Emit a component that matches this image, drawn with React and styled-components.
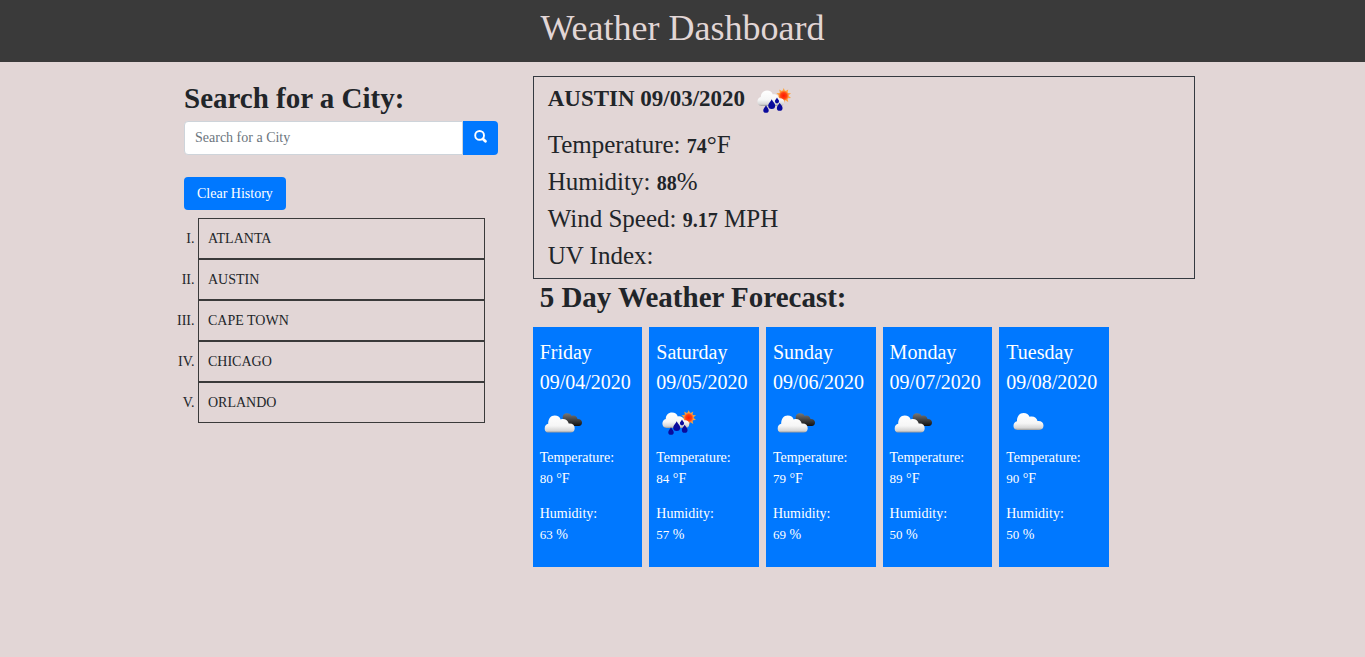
import React from "react";
import styled, { createGlobalStyle } from "styled-components";

const ink = "#212529";
const slate = "#3a3a3a";
const blush = "#e2d6d6";
const blue = "#0078ff";

const GlobalStyle = createGlobalStyle`
  *, *::before, *::after { box-sizing: border-box; }
  body {
    margin: 0;
    background: ${blush};
    color: ${ink};
    font-family: "Liberation Serif", "Times New Roman", serif;
    font-size: 14px;
    line-height: 21px;
  }
  h1, h2, h3, p, ol, dl, dd { margin: 0; }
  button, input { font: inherit; }
`;

const Header = styled.header`
  background: ${slate};
  color: ${blush};
  padding: 7px 14px 13px;
  text-align: center;
`;

const SiteTitle = styled.h1`
  font-size: 36px;
  line-height: 42px;
  font-weight: 400;
`;

const Layout = styled.main`
  display: grid;
  grid-template-columns: 1fr 2fr;
  max-width: 1025px;
  margin: 0 auto;
  padding-top: 14px;
`;

const Sidebar = styled.aside`
  padding: 5px 14px 14px;
`;

const SectionTitle = styled.h2`
  font-size: 29px;
  line-height: 34px;
  font-weight: 700;
`;

const SearchForm = styled.form`
  display: flex;
  margin-top: 6px;
`;

const SearchInput = styled.input`
  flex: 1;
  min-width: 0;
  height: 34px;
  padding: 4px 10px;
  border: 1px solid #ced4da;
  border-radius: 4px 0 0 4px;
  background: #fff;
  color: #495057;
  &::placeholder { color: #6c757d; opacity: 1; }
`;

const Button = styled.button`
  border: 0;
  border-radius: ${(p) => (p.$attached ? "0 4px 4px 0" : "4px")};
  background: ${blue};
  color: #fff;
  padding: 6px ${(p) => (p.$attached ? "11px" : "13px")};
  cursor: pointer;
`;

const SearchIcon = styled.svg`
  display: block;
  width: 13px;
  height: 13px;
  margin-bottom: 4px;
`;

const History = styled.div`
  margin-top: 22px;
`;

const CityList = styled.ol`
  list-style: upper-roman;
  margin-top: 8px;
  padding: 0 13px 0 14px;
`;

const City = styled.li`
  border: 1px solid ${slate};
  padding: 9px;
`;

const Content = styled.section`
  padding-left: 21px;
`;

const Current = styled.article`
  border: 1px solid #343a40;
  padding: 4px 14px;
`;

const CurrentTitle = styled.h3`
  display: flex;
  align-items: center;
  gap: 6px;
  margin-bottom: 9px;
  font-size: 23px;
  line-height: 28px;
`;

const Reading = styled.p`
  font-size: 25px;
  line-height: 37px;
  b {
    font-size: 20px;
    line-height: 20px;
  }
`;

const ForecastTitle = styled(SectionTitle)`
  padding: 1px 7px 0;
`;

const Forecast = styled.div`
  display: grid;
  grid-template-columns: repeat(5, 1fr);
  gap: 7px;
  width: 87%;
  margin-top: 13px;
`;

const DayCard = styled.article`
  background: ${blue};
  color: #fff;
  padding: 10px 7px 22px;
`;

const DayTitle = styled.h3`
  font-size: 20px;
  line-height: 30px;
  font-weight: 400;
  margin-bottom: 6px;
`;

const Stat = styled.p`
  margin-top: ${(p) => (p.$first ? "8px" : "14px")};
  small { font-size: 13px; }
`;

const Picture = styled.svg`
  display: block;
  flex: none;
  width: 50px;
  height: 36px;
`;

const cloudPath =
  "M4 17C1 17 0 14.8 0 12.8C0 10.2 1.6 8.7 3.5 8.2C3.4 3.4 6 0 10 0C13.1 0 15.2 1.7 16 3.8C19.8 2.6 23.4 4.5 24 8C27.7 7.5 30 9.7 30 12.6C30 15.2 28.5 17 25.8 17Z";

const drops = [
  [16, 24.2, 1.05],
  [21.7, 18.2, 1.35],
  [27, 16.6, 0.8],
  [29.7, 21.8, 1.1],
];

const rayAngles = [0, 36, 72, 108, 144, 180, 216, 252, 288, 324];

function WeatherIcon({ kind, label }) {
  const uid = React.useId();
  const light = `${uid}light`;
  const dark = `${uid}dark`;
  const sun = `${uid}sun`;
  return (
    <Picture viewBox="1 0 50 36" role="img" aria-label={label}>
      <defs>
        <linearGradient id={light} x1="0" y1="0" x2="0" y2="1">
          <stop offset="0" stopColor="#fff" />
          <stop offset="0.6" stopColor="#f6f6f6" />
          <stop offset="0.88" stopColor="#d6d6d6" />
          <stop offset="1" stopColor="#9a9a9a" />
        </linearGradient>
        <linearGradient id={dark} x1="0" y1="0" x2="0" y2="1">
          <stop offset="0" stopColor="#777" />
          <stop offset="0.5" stopColor="#444" />
          <stop offset="1" stopColor="#111" />
        </linearGradient>
        <radialGradient id={sun}>
          <stop offset="0" stopColor="#ff1800" />
          <stop offset="0.6" stopColor="#ff4010" />
          <stop offset="1" stopColor="#ffa040" />
        </radialGradient>
      </defs>
      {kind === "rain" && (
        <>
          {rayAngles.map((angle) => (
            <path
              key={angle}
              transform={`rotate(${angle} 33.7 14.7)`}
              d="M32.4 10.2L33.7 7L35 10.2Z"
              fill="#ffa238"
            />
          ))}
          <circle cx="33.7" cy="14.7" r="5.1" fill={`url(#${sun})`} />
          <path
            d="M11.5 25C8.6 25 7.4 22.8 7.4 20.6C7.4 18.2 9 16.4 10.8 16C10.8 12.2 13.4 9.6 17 9.6C20 9.6 22 11.2 22.8 13.4C25.6 12.6 28.4 14.2 29.2 17.2C32.4 16.9 34.2 18.6 34.2 21C34.2 23.4 32.8 25 30.5 25Z"
            fill={`url(#${light})`}
          />
          {drops.map(([x, y, scale]) => (
            <path
              key={x}
              transform={`translate(${x} ${y}) scale(${scale})`}
              d="M0 0C.7 1.7 2.6 3 2.6 4.7A2.6 2.6 0 0 1-2.6 4.7C-2.6 3-.7 1.7 0 0Z"
              fill="#0a0a9c"
            />
          ))}
        </>
      )}
      {kind === "broken" && (
        <>
          <path
            d="M24 17C23 13 24.5 10.3 28 10.3C30.7 10.3 32.1 11.5 32.8 13C35.6 11.8 37.8 13.3 38.5 15.9C41.5 15.8 43 17.6 43 19.6C43 21.8 41.8 23 39.8 23H30Z"
            fill={`url(#${dark})`}
          />
          <path d={cloudPath} transform="translate(5.7 12.6)" fill={`url(#${light})`} />
        </>
      )}
      {kind === "cloud" && (
        <path d={cloudPath} transform="translate(8.5 10)" fill={`url(#${light})`} />
      )}
    </Picture>
  );
}

const cities = ["ATLANTA", "AUSTIN", "CAPE TOWN", "CHICAGO", "ORLANDO"];

const days = [
  { name: "Friday", date: "09/04/2020", kind: "broken", label: "Broken clouds", temp: 80, humidity: 63 },
  { name: "Saturday", date: "09/05/2020", kind: "rain", label: "Rain", temp: 84, humidity: 57 },
  { name: "Sunday", date: "09/06/2020", kind: "broken", label: "Broken clouds", temp: 79, humidity: 69 },
  { name: "Monday", date: "09/07/2020", kind: "broken", label: "Broken clouds", temp: 89, humidity: 50 },
  { name: "Tuesday", date: "09/08/2020", kind: "cloud", label: "Scattered clouds", temp: 90, humidity: 50 },
];

export default function App() {
  return (
    <>
      <GlobalStyle />
      <Header>
        <SiteTitle>Weather Dashboard</SiteTitle>
      </Header>
      <Layout>
        <Sidebar>
          <SectionTitle as="label" htmlFor="city">Search for a City:</SectionTitle>
          <SearchForm onSubmit={(e) => e.preventDefault()}>
            <SearchInput id="city" type="text" placeholder="Search for a City" />
            <Button $attached type="submit" aria-label="Search">
              <SearchIcon viewBox="0 0 13 13" aria-hidden="true">
                <circle cx="5.6" cy="5.4" r="4.4" fill="none" stroke="#fff" strokeWidth="1.9" />
                <path d="M9 8.9L11.4 11.2" stroke="#fff" strokeWidth="2.8" strokeLinecap="round" />
              </SearchIcon>
            </Button>
          </SearchForm>
          <History>
            <Button type="button">Clear History</Button>
            <CityList>
              {cities.map((city) => (
                <City key={city}>{city}</City>
              ))}
            </CityList>
          </History>
        </Sidebar>
        <Content>
          <Current>
            <CurrentTitle>
              AUSTIN 09/03/2020
              <WeatherIcon kind="rain" label="Rain" />
            </CurrentTitle>
            <Reading>Temperature: <b>74</b>°F</Reading>
            <Reading>Humidity: <b>88</b>%</Reading>
            <Reading>Wind Speed: <b>9.17</b> MPH</Reading>
            <Reading>UV Index:</Reading>
          </Current>
          <ForecastTitle>5 Day Weather Forecast:</ForecastTitle>
          <Forecast>
            {days.map((day) => (
              <DayCard key={day.name}>
                <DayTitle>
                  {day.name}
                  <br />
                  {day.date}
                </DayTitle>
                <WeatherIcon kind={day.kind} label={day.label} />
                <Stat $first>
                  Temperature:
                  <br />
                  <small>{day.temp}</small> °F
                </Stat>
                <Stat>
                  Humidity:
                  <br />
                  <small>{day.humidity}</small> %
                </Stat>
              </DayCard>
            ))}
          </Forecast>
        </Content>
      </Layout>
    </>
  );
}
